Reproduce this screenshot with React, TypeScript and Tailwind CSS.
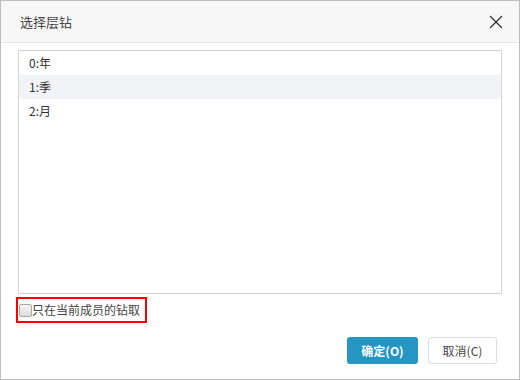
import { X } from "lucide-react";

const levels = ["0:年", "1:季", "2:月"];

export default function App() {
  return (
    <div
      className="w-[520px] h-[380px] bg-white border border-[#bdbdbd] flex flex-col text-[#333]"
      style={{ fontFamily: '"Noto Sans CJK SC", "Liberation Sans", sans-serif' }}
    >
      <div className="h-[42px] shrink-0 bg-[#f7f7f7] border-b border-[#e6e6e6] flex items-center justify-between pl-[19px] pr-[12px]">
        <span className="text-[13px] text-[#444]">选择层钻</span>
        <X className="w-[22px] h-[22px] text-[#2b2b33]" strokeWidth={1.3} />
      </div>

      <div className="flex-1 flex flex-col px-[17px] pt-[7px]">
        <ul className="h-[244px] border border-[#d4d4d4]">
          {levels.map((level, i) => (
            <li
              key={level}
              className={
                i === 1
                  ? "h-[24px] flex items-center pl-[10px] text-[12px] bg-[#f2f3f7]"
                  : "h-[24px] flex items-center pl-[10px] text-[12px]"
              }
            >
              {level}
            </li>
          ))}
        </ul>

        <div className="mt-[3px] -ml-[2px] w-[131px] h-[26px] border-2 border-[#ff0000] flex items-center pl-[1px]">
          <span className="shrink-0 w-[13px] h-[13px] rounded-[2px] border border-[#a9a9a9] bg-gradient-to-b from-[#f4f4f4] to-[#dcdcdc]" />
          <span className="text-[12px] text-[#444] whitespace-nowrap">只在当前成员的钻取</span>
        </div>

        <div className="flex justify-end gap-[10px] mt-[14px] pr-[5px]">
          <button className="w-[71px] h-[27px] rounded-[3px] bg-[#2596c4] text-white text-[12px] font-bold">
            确定(O)
          </button>
          <button className="w-[69px] h-[27px] rounded-[3px] bg-white border border-[#dcdcdc] text-[#444] text-[12px]">
            取消(C)
          </button>
        </div>
      </div>
    </div>
  );
}
